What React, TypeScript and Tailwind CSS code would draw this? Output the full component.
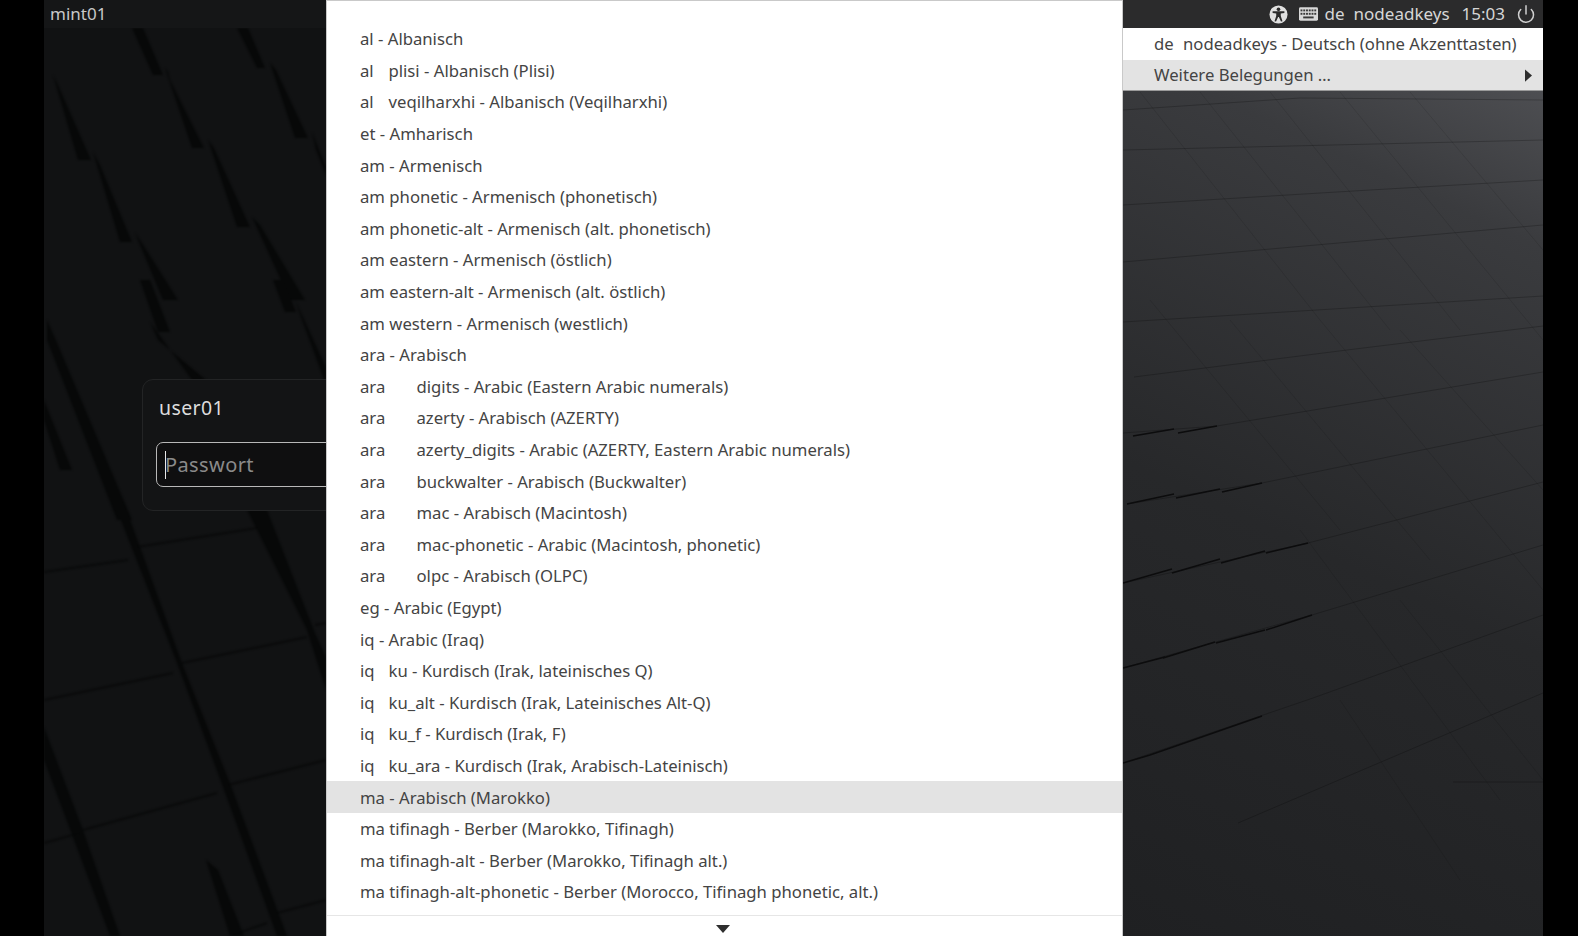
import { Power } from "lucide-react";

type Row = { tag?: string; w?: string; text: string; active?: boolean };

const rows: Row[] = [
  { text: "al - Albanisch" },
  { tag: "al", w: "w-[28.5px]", text: "plisi - Albanisch (Plisi)" },
  { tag: "al", w: "w-[28.5px]", text: "veqilharxhi - Albanisch (Veqilharxhi)" },
  { text: "et - Amharisch" },
  { text: "am - Armenisch" },
  { text: "am phonetic - Armenisch (phonetisch)" },
  { text: "am phonetic-alt - Armenisch (alt. phonetisch)" },
  { text: "am eastern - Armenisch (östlich)" },
  { text: "am eastern-alt - Armenisch (alt. östlich)" },
  { text: "am western - Armenisch (westlich)" },
  { text: "ara - Arabisch" },
  { tag: "ara", w: "w-[56.5px]", text: "digits - Arabic (Eastern Arabic numerals)" },
  { tag: "ara", w: "w-[56.5px]", text: "azerty - Arabisch (AZERTY)" },
  { tag: "ara", w: "w-[56.5px]", text: "azerty_digits - Arabic (AZERTY, Eastern Arabic numerals)" },
  { tag: "ara", w: "w-[56.5px]", text: "buckwalter - Arabisch (Buckwalter)" },
  { tag: "ara", w: "w-[56.5px]", text: "mac - Arabisch (Macintosh)" },
  { tag: "ara", w: "w-[56.5px]", text: "mac-phonetic - Arabic (Macintosh, phonetic)" },
  { tag: "ara", w: "w-[56.5px]", text: "olpc - Arabisch (OLPC)" },
  { text: "eg - Arabic (Egypt)" },
  { text: "iq - Arabic (Iraq)" },
  { tag: "iq", w: "w-[28.5px]", text: "ku - Kurdisch (Irak, lateinisches Q)" },
  { tag: "iq", w: "w-[28.5px]", text: "ku_alt - Kurdisch (Irak, Lateinisches Alt-Q)" },
  { tag: "iq", w: "w-[28.5px]", text: "ku_f - Kurdisch (Irak, F)" },
  { tag: "iq", w: "w-[28.5px]", text: "ku_ara - Kurdisch (Irak, Arabisch-Lateinisch)" },
  { text: "ma - Arabisch (Marokko)", active: true },
  { text: "ma tifinagh - Berber (Marokko, Tifinagh)" },
  { text: "ma tifinagh-alt - Berber (Marokko, Tifinagh alt.)" },
  { text: "ma tifinagh-alt-phonetic - Berber (Morocco, Tifinagh phonetic, alt.)" },
];

const bands = [
  "132,28 143,28 163,75 153,75",
  "237,28 248,28 265,68 257,68",
  "165,68 192,148 204,148 170,80 168,72",
  "270,63 295,138 308,138 276,70",
  "53,75 78,160 91,160 58,85",
  "93,152 120,242 132,242 100,165",
  "208,140 237,227 250,227 214,148",
  "312,132 326,167 326,175 316,150",
  "252,217 290,300 305,300 260,225",
  "135,233 163,300 178,300 142,243",
  "150,322 192,380 206,380 158,340",
  "140,280 158,332 170,332 150,280",
  "273,280 285,312 296,312 283,280",
  "295,300 326,367 326,385 302,320",
  "47,340 117,520 132,520 58,345 47,320",
  "113,500 123,500 182,663 230,783 287,936 277,936 223,787 177,663",
  "247,510 267,510 315,633 326,657 326,690 307,630",
  "44,727 83,830 120,936 110,936 44,760",
  "44,400 44,420 60,470 72,470",
  "230,936 244,936 218,870 206,860",
];

const leftLines = [
  "44,572 128,560",
  "137,547 257,528",
  "44,700 173,673",
  "182,663 307,637",
  "315,625 326,623",
  "228,785 326,760",
  "83,830 217,793",
  "44,843 80,833",
  "277,913 326,900",
  "230,936 267,923",
];

const rightLines = [
  "1123,322 1543,296",
  "1134,377 1347,350 1543,326",
  "1123,433 1217,426 1543,372",
  "1127,504 1262,483 1543,425",
  "1123,583 1308,543 1543,482",
  "1123,668 1312,615 1543,545",
  "1123,763 1313,698 1543,615",
  "1238,823 1543,693",
  "1453,782 1543,782",
  "1123,150 1543,140",
  "1123,205 1370,190 1543,180",
  "1123,262 1543,225",
  "1123,110 1300,98 1543,100",
];

const rightStrong = [
  "1133,436 1174,429",
  "1178,433 1217,426",
  "1127,504 1174,494",
  "1176,498 1220,489",
  "1222,492 1262,483",
  "1123,583 1172,569",
  "1172,573 1220,559",
  "1221,563 1265,551",
  "1266,553 1308,543",
  "1123,668 1165,657",
  "1163,658 1215,642",
  "1216,643 1265,630",
  "1266,630 1312,615",
  "1123,763 1150,755",
  "1150,755 1262,716",
];

const crossLines = [
  [1140, 92, 1320, 320],
  [1200, 92, 1390, 330],
  [1270, 92, 1460, 330],
  [1340, 92, 1543, 340],
  [1410, 92, 1543, 250],
  [1150, 300, 1340, 530],
  [1230, 320, 1430, 560],
  [1320, 320, 1543, 590],
  [1400, 330, 1543, 490],
  [1300, 530, 1500, 800],
  [1400, 600, 1543, 780],
  [1340, 700, 1460, 880],
];

function AccessIcon() {
  return (
    <svg viewBox="0 0 20 20" className="h-[19px] w-[19px] shrink-0">
      <circle cx="10" cy="10" r="9.5" fill="#e0e0e0" />
      <circle cx="10" cy="4.6" r="1.9" fill="#2b2b2b" />
      <path
        d="M3.8 6.6 L16.2 6.6 L16.2 8.3 L12.4 9 L12.4 11.6 L14.2 17 L12.6 17.4 L10.4 12.6 L9.6 12.6 L7.4 17.4 L5.8 17 L7.6 11.6 L7.6 9 L3.8 8.3 Z"
        fill="#2b2b2b"
      />
    </svg>
  );
}

function KeyboardIcon() {
  return (
    <svg viewBox="0 0 20 14" className="h-[14px] w-[19px] shrink-0">
      <rect x="0" y="0" width="20" height="14" rx="1.5" fill="#d8d8d8" />
      {[0, 1, 2, 3, 4, 5].map((i) => (
        <rect key={i} x={1.6 + i * 2.9} y="2.2" width="2" height="2" fill="#3a3a3a" />
      ))}
      {[0, 1, 2, 3, 4, 5].map((i) => (
        <rect key={i} x={1.6 + i * 2.9} y="5.8" width="2" height="2" fill="#3a3a3a" />
      ))}
      <rect x="4.4" y="9.6" width="11" height="2" fill="#3a3a3a" />
    </svg>
  );
}

export default function App() {
  return (
    <div className="flex h-[936px] w-[1578px] overflow-hidden bg-black font-['Noto_Sans',sans-serif]">
      <div className="w-[44px] shrink-0" />

      <div className="relative flex w-[282px] shrink-0 flex-col overflow-hidden bg-[#111213]">
        <svg
          viewBox="44 0 282 936"
          className="absolute inset-0 h-[936px] w-[282px] blur-[0.8px]"
        >
          {bands.map((p) => (
            <polygon key={p} points={p} fill="#070808" />
          ))}
          {leftLines.map((p) => (
            <polyline key={p} points={p} fill="none" stroke="#070808" strokeWidth="1.5" />
          ))}
        </svg>
        <div className="relative flex h-[28px] shrink-0 items-center bg-[#151617] pl-[6px] text-[17px] text-[#c8c8c8]">
          mint01
        </div>
        <div className="relative ml-[98px] mt-[351px] h-[132px] w-[400px] shrink-0 rounded-[11px] border border-[#232425] bg-[#131415] pl-[13px] pt-[14px]">
          <div className="pl-[3px] text-[19.5px] leading-[28px] tracking-[0.4px] text-[#dddddd]">user01</div>
          <div className="mt-[20px] flex h-[45px] items-center rounded-[7px] border-[1.5px] border-[#b8b8b8] bg-[#0f0f10] pl-[8px] text-[20px] tracking-[0.4px] text-[#8a8a8a]">
            <span className="mr-[-1px] h-[28px] w-px bg-[#e8e8e8]" />
            Passwort
          </div>
        </div>
      </div>

      <div className="flex w-[797px] shrink-0 flex-col border-x border-t border-[#c9c9c9] bg-white text-[#444444]">
        <div className="pt-[22px]">
          {rows.map((r) => (
            <div
              key={r.text}
              className={`flex h-[31.6px] items-center pl-[33px] text-[16.7px] ${r.active ? "bg-[#e3e3e3]" : ""}`}
            >
              {r.tag ? <span className={`shrink-0 ${r.w}`}>{r.tag}</span> : null}
              <span>{r.text}</span>
            </div>
          ))}
        </div>
        <div className="mt-[7px] flex flex-1 items-center justify-center border-t border-[#e6e6e6]">
          <svg viewBox="0 0 14 8" className="h-[8px] w-[14px] translate-x-[-2px] translate-y-[3px]">
            <path d="M0 0 H14 L7 8 Z" fill="#2e2e2e" />
          </svg>
        </div>
      </div>

      <div className="relative flex w-[420px] shrink-0 flex-col overflow-hidden bg-[linear-gradient(205deg,#58595d_0%,#3a3b3e_22%,#27282a_58%,#1f2022_100%)]">
        <svg viewBox="1123 0 420 936" className="absolute inset-0 h-[936px] w-[420px]">
          {crossLines.map((l) => (
            <line key={l.join()} x1={l[0]} y1={l[1]} x2={l[2]} y2={l[3]} stroke="#000000" strokeOpacity="0.1" />
          ))}
          {rightLines.map((p) => (
            <polyline key={p} points={p} fill="none" stroke="#000000" strokeOpacity="0.22" />
          ))}
          {rightStrong.map((p) => (
            <polyline key={p} points={p} fill="none" stroke="#0c0c0d" strokeWidth="1.5" />
          ))}
        </svg>
        <div className="relative flex h-[28px] shrink-0 items-center justify-end bg-[#2b2b2c] pr-[7px] text-[17px] text-[#d6d6d6]">
          <AccessIcon />
          <span className="ml-[11px]"><KeyboardIcon /></span>
          <span className="ml-[7px]">de</span>
          <span className="ml-[9px]">nodeadkeys</span>
          <span className="ml-[12px]">15:03</span>
          <Power className="ml-[11px] h-[20px] w-[20px] text-[#d0d0d0]" strokeWidth={1.8} />
        </div>
        <div className="relative border-b border-[#9a9a9a] bg-white text-[16.7px] text-[#444444]">
          <div className="flex h-[32px] items-center pl-[31px]">
            <span className="w-[29px]">de</span>
            <span>nodeadkeys - Deutsch (ohne Akzenttasten)</span>
          </div>
          <div className="flex h-[30px] items-center justify-between bg-[#e3e3e3] pl-[31px] pr-[11px]">
            <span>Weitere Belegungen …</span>
            <svg viewBox="0 0 8 14" className="h-[13px] w-[7px]">
              <path d="M0 0 L8 7 L0 14 Z" fill="#2e2e2e" />
            </svg>
          </div>
        </div>
      </div>

      <div className="flex-1" />
    </div>
  );
}
